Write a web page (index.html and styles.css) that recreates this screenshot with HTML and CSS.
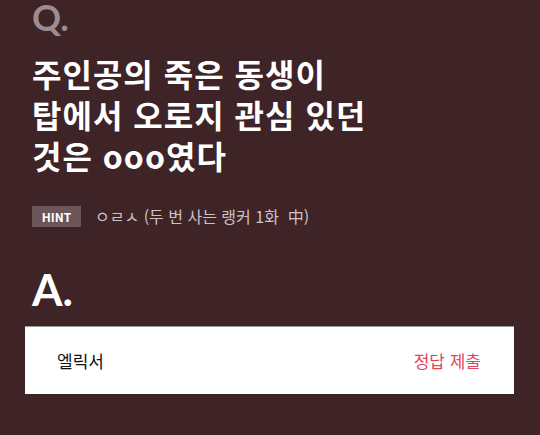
FILE: index.html
```html
<!DOCTYPE html>
<html lang="ko">

<head>
  <meta charset="UTF-8" />
  <meta name="viewport" content="width=device-width, initial-scale=1.0" />
  <title>Quiz</title>
  <link rel="stylesheet" href="styles.css">
</head>

<body>
  <div class="quiz">
    <div class="q-mark">Q.</div>
    <h1 class="question">주인공의 죽은 동생이<br>탑에서 오로지 관심 있던<br>것은 ooo였다</h1>
    <div class="hint">
      <span class="hint-badge">HINT</span>
      <span class="hint-text">ㅇㄹㅅ (두 번 사는 랭커 1화&nbsp; 中)</span>
    </div>
    <div class="a-mark">A.</div>
    <form class="answer">
      <span class="answer-value">엘릭서</span>
      <button type="submit" class="submit-btn">정답 제출</button>
    </form>
  </div>
</body>

</html>
```

FILE: styles.css
```css
body {
  margin: 0;
  background-color: #3e2327;
  font-family: "Noto Sans CJK KR", "Noto Sans", sans-serif;
}

.quiz {
  padding: 0 26px 0 25px;
}

.q-mark {
  color: #9a8c8f;
  font-family: "Lato", "Noto Sans", sans-serif;
  font-size: 36px;
  font-weight: 700;
  line-height: 40px;
  padding-left: 7px;
  margin-top: -3px;
}

.question {
  color: white;
  font-size: 32px;
  font-weight: 700;
  line-height: 41px;
  letter-spacing: 1px;
  margin: 16px 0 0 7px;
}

.hint {
  display: flex;
  align-items: center;
  margin: 28px 0 0 7px;
}

.hint-badge {
  background-color: #6b5659;
  color: white;
  font-size: 12px;
  font-weight: 700;
  width: 49px;
  height: 21px;
  line-height: 21px;
  text-align: center;
}

.hint-text {
  color: #cdc3c4;
  font-size: 16px;
  margin-left: 14px;
}

.a-mark {
  color: white;
  font-family: "Lato", "Noto Sans", sans-serif;
  font-size: 44px;
  font-weight: 700;
  line-height: 50px;
  margin: 36px 0 0 7px;
}

.answer {
  display: flex;
  justify-content: space-between;
  align-items: center;
  background-color: white;
  border-top: 1px solid #9b9b9b;
  height: 67px;
  margin-top: 12px;
  padding: 0 33px 0 32px;
}

.answer-value {
  font-size: 17px;
  color: #111;
}

.submit-btn {
  border: none;
  background: none;
  padding: 0;
  font-family: inherit;
  font-size: 17px;
  color: #e2465c;
}
```
